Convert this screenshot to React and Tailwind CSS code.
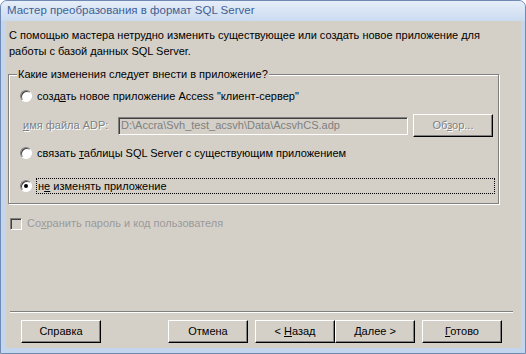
import React from 'react'

const font = { fontFamily: '"Liberation Sans", Arial, sans-serif' }

function Radio({ checked }) {
  return (
    <span className="relative w-[12px] h-[12px] shrink-0 rounded-full bg-white border border-t-[#808080] border-l-[#808080] border-r-white border-b-white shadow-[inset_1px_1px_0_#404040] flex items-center justify-center">
      {checked && <span className="w-[4px] h-[4px] rounded-full bg-black" />}
    </span>
  )
}

function Btn({ children, disabled, className = '' }) {
  return (
    <button
      className={
        'w-[80px] h-[23px] shrink-0 bg-[#d4d0c8] border border-t-white border-l-white border-r-black border-b-black shadow-[inset_-1px_-1px_0_#808080] text-[11px] leading-none flex items-center justify-center ' +
        (disabled ? 'text-[#808080] [text-shadow:1px_1px_0_#fff] ' : 'text-black ') +
        className
      }
    >
      <span className="whitespace-pre">{children}</span>
    </button>
  )
}

export default function App() {
  return (
    <div className="w-[526px] h-[354px] flex flex-col bg-[#c4d6ee] border border-[#6f8bb4] rounded-t-[7px] overflow-hidden" style={font}>
      <div className="h-[20px] shrink-0 bg-gradient-to-b from-[#e6eef9] to-[#cbdbf0] flex items-center pl-[6px] text-[11.5px] text-[#3f5f93]">
        Мастер преобразования в формат SQL Server
      </div>

      <div className="flex-1 ml-[5px] mr-[4px] mb-[5px] bg-[#d4d0c8] flex flex-col text-[11px] text-black">
        <p className="pt-[6px] pl-[3px] leading-[16px]">
          С помощью мастера нетрудно изменить существующее или создать новое приложение для
          <br />
          работы с базой данных SQL Server.
        </p>

        <div className="relative mt-[15px] ml-[2px] w-[491px] h-[130px] shrink-0 border border-[#808080] shadow-[1px_1px_0_#fff,inset_1px_1px_0_#fff] flex flex-col">
          <span className="absolute -top-[8px] left-[8px] px-[1px] bg-[#d4d0c8] leading-[14px]">
            Какие изменения следует внести в приложение?
          </span>

          <div className="mt-[13px] flex items-center h-[16px]">
            <span className="ml-[11px]"><Radio /></span>
            <span className="ml-[3px] px-[2px] leading-[16px]">
              созд<u>а</u>ть новое приложение Access "клиент-сервер"
            </span>
          </div>

          <div className="mt-[10px] flex items-center h-[23px]">
            <span className="ml-[14px] w-[95px] text-[#808080] [text-shadow:1px_1px_0_#fff]">
              <u>и</u>мя файла ADP:
            </span>
            <div className="w-[290px] h-[18px] border border-t-[#808080] border-l-[#808080] border-r-white border-b-white shadow-[inset_1px_1px_0_#404040] flex items-center pl-[2px] text-[#808080]">
              D:\Accra\Svh_test_acsvh\Data\AcsvhCS.adp
            </div>
            <Btn disabled className="ml-[5px]">
              Об<u>з</u>ор...
            </Btn>
          </div>

          <div className="mt-[8px] flex items-center h-[16px]">
            <span className="ml-[11px]"><Radio /></span>
            <span className="ml-[3px] px-[2px] leading-[16px]">
              связать <u>т</u>аблицы SQL Server с существующим приложением
            </span>
          </div>

          <div className="mt-[17px] flex items-center h-[16px]">
            <span className="ml-[11px]"><Radio checked /></span>
            <span className="ml-[4px] px-[1px] w-[459px] h-[16px] leading-[14px] border border-dotted border-black">
              н<u>е</u> изменять приложение
            </span>
          </div>
        </div>

        <div className="mt-[13px] ml-[4px] flex items-center h-[13px]">
          <span className="w-[12px] h-[12px] border border-t-[#808080] border-l-[#808080] border-r-white border-b-white shadow-[inset_1px_1px_0_#404040]" />
          <span className="ml-[5px] text-[#9a9a9a]">
            Со<u>х</u>ранить пароль и код пользователя
          </span>
        </div>

        <div className="mt-[81px] ml-[4px] w-[503px] h-[2px] shrink-0 border-t border-t-[#808080] border-b border-b-white" />

        <div className="mt-[7px] ml-[15px] flex">
          <Btn>Справка</Btn>
          <Btn className="ml-[67px]">Отмена</Btn>
          <Btn className="ml-[7px]">
            &lt; <u>Н</u>азад
          </Btn>
          <Btn>
            <u>Д</u>алее &gt;
          </Btn>
          <Btn className="ml-[7px]">
            <u>Г</u>отово
          </Btn>
        </div>
      </div>
    </div>
  )
}
